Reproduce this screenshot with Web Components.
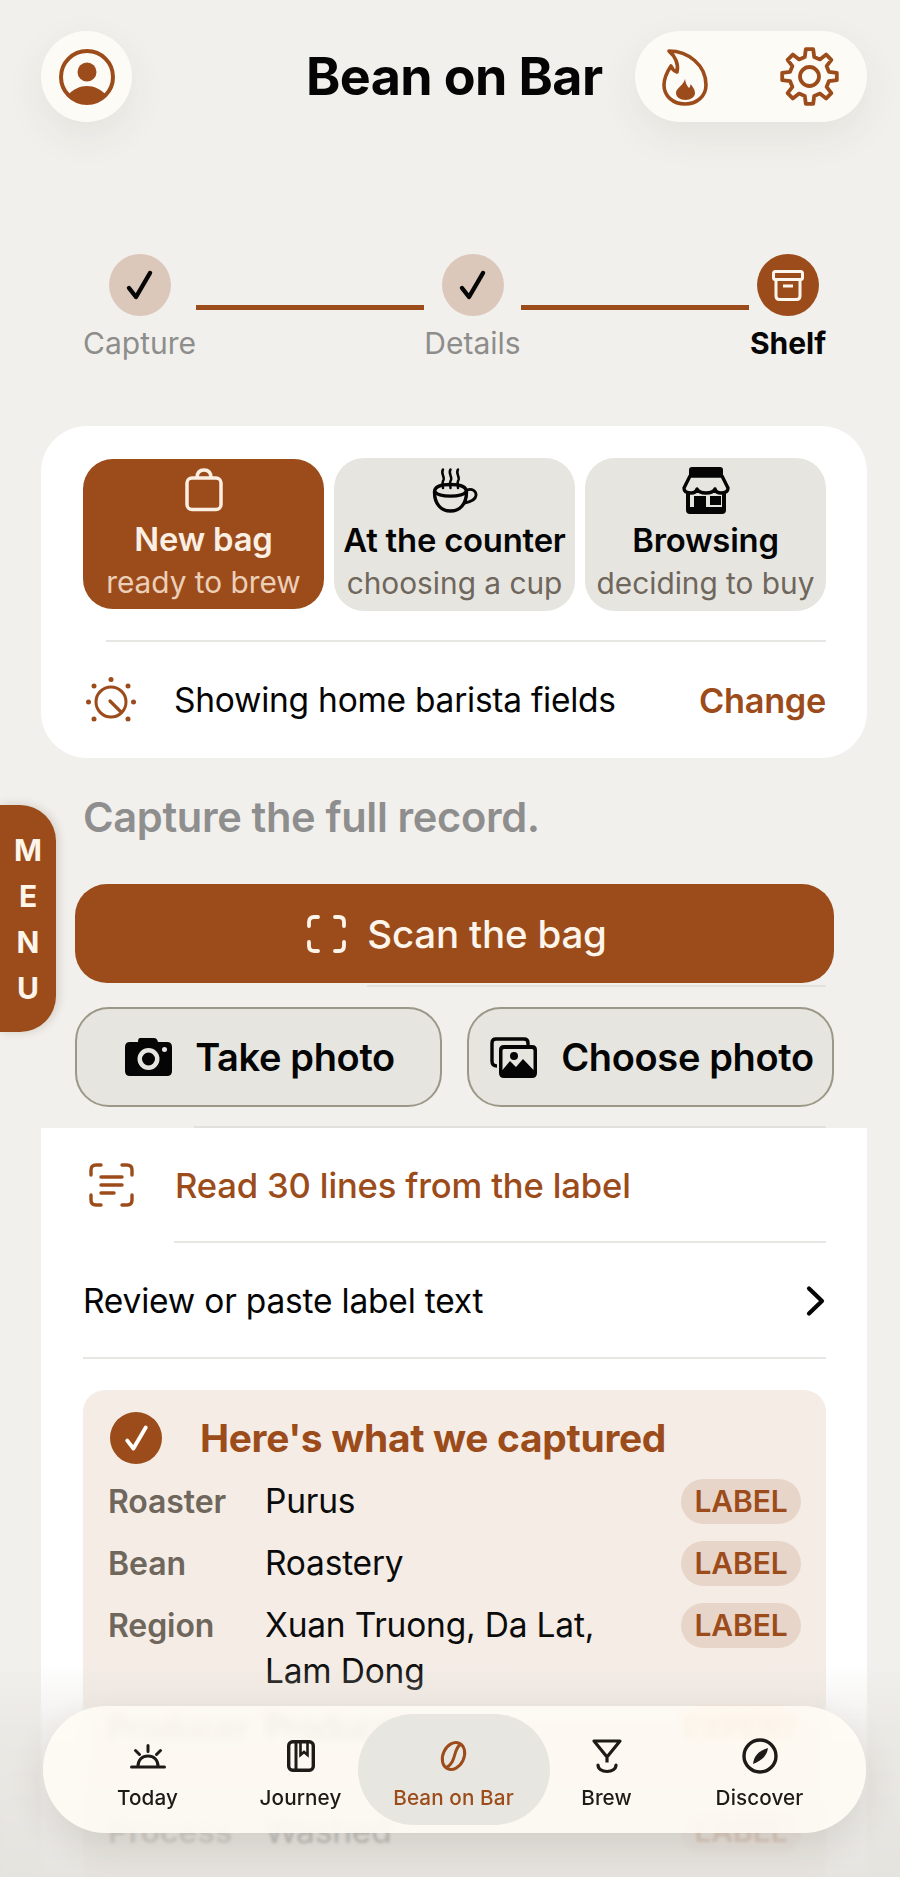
<!DOCTYPE html>
<html>
<head>
<meta charset="utf-8">
<title>Bean on Bar</title>
<style>
  html, body { margin: 0; padding: 0; }
  body {
    width: 900px; height: 1877px; overflow: hidden; position: relative;
    background: #f2f0ec; color: #050505;
    font-family: Inter, "Liberation Sans", sans-serif;
  }
</style>
</head>
<body>
<bb-header></bb-header>
<bb-stepper></bb-stepper>
<bb-mode-card></bb-mode-card>
<bb-capture></bb-capture>
<bb-label-list></bb-label-list>
<bb-menu-tab></bb-menu-tab>
<bb-bottom-fade></bb-bottom-fade>
<bb-nav></bb-nav>

<script>
const BROWN = '#9c4c1a';

function gearPath(cx, cy, outer, inner, teeth) {
  let d = '';
  const step = Math.PI * 2 / teeth;
  for (let i = 0; i < teeth; i++) {
    const a = i * step - Math.PI / 2;
    const pts = [
      [inner, a - step * 0.3], [outer, a - step * 0.17],
      [outer, a + step * 0.17], [inner, a + step * 0.3]
    ];
    pts.forEach((p, j) => {
      const x = (cx + Math.cos(p[1]) * p[0]).toFixed(1);
      const y = (cy + Math.sin(p[1]) * p[0]).toFixed(1);
      d += (i === 0 && j === 0 ? 'M' : 'L') + x + ' ' + y + ' ';
    });
  }
  return d + 'Z';
}

const ICONS = {
  avatar: [56, 56, `<defs><clipPath id="c"><circle cx="28" cy="28" r="26"/></clipPath></defs>
    <circle cx="28" cy="28" r="26" fill="none" stroke="currentColor" stroke-width="4"/>
    <circle cx="28" cy="23" r="9.5" fill="currentColor"/>
    <path clip-path="url(#c)" d="M8 47C14 40 21 37 28 37C35 37 42 40 48 47L48 56L8 56Z" fill="currentColor"/>`],
  flame: [46, 58, `<path d="M7 3C26 3 44 17 44 37C44 48 35 56 23 56C11 56 2 48 2 37C2 30 5 24 9 18C10 21 12 23 15 24C17 16 13 8 7 3Z" fill="none" stroke="currentColor" stroke-width="3.6" stroke-linejoin="round"/>
    <path d="M23 31C23.5 35 25 38 27 40C28 39 28.500 37.500 28.500 36C31 39 33 42 33 45C33 49 28.500 52 23.500 52C18 52 14 49 14 45C14 40 21 38 23 31Z" fill="currentColor"/>`],
  gear: [59, 59, `<path d="${gearPath(29.5, 29.5, 27.5, 20, 8)}" fill="none" stroke="currentColor" stroke-width="3.800" stroke-linejoin="round"/>
    <circle cx="29.500" cy="29.500" r="9.500" fill="none" stroke="currentColor" stroke-width="3.800"/>`],
  check: [27, 30, `<path d="M3 18L10 27L24 3" fill="none" stroke="currentColor" stroke-width="4.400" stroke-linecap="round" stroke-linejoin="round"/>`],
  archive: [32, 31, `<rect x="1.500" y="1.500" width="29" height="8" rx="2" fill="none" stroke="currentColor" stroke-width="3"/>
    <path d="M4 10V26Q4 29.500 7.500 29.500H24.500Q28 29.500 28 26V10" fill="none" stroke="currentColor" stroke-width="3"/>
    <path d="M11 16H21" stroke="currentColor" stroke-width="3"/>`],
  bag: [38, 43, `<rect x="2" y="10" width="34" height="31.500" rx="5" fill="none" stroke="currentColor" stroke-width="3.500"/>
    <path d="M12 10C12 5 14.500 2 19 2C23.500 2 26 5 26 10" fill="none" stroke="currentColor" stroke-width="3.500"/>`],
  cup: [46, 45, `<g fill="none" stroke="currentColor" stroke-linecap="round">
    <path stroke-width="2.500" d="M11 1.500C8 6 14 9 11 13C10 15 11 18 11 20M18.500 1.500C15.500 6 21.500 9 18.500 13C17.500 15 18.500 18 18.500 20M26 1.500C23 6 29 9 26 13C25 15 26 18 26 20"/>
    <path stroke-width="3.400" d="M2.500 24C2.500 19 9 16.500 18.500 16.500C28 16.500 34.500 19 34.500 24C34.500 36 28 43 18.500 43C9 43 2.500 36 2.500 24Z"/>
    <path stroke-width="3.400" d="M3 24C7 29.500 30 29.500 34 24"/>
    <path stroke-width="2.800" d="M35 22C40 20 44.500 23 44 27.500C43.500 32 38 34 32.500 35"/></g>`],
  store: [48, 47, `<path fill="currentColor" d="M10 0H38Q41 0 41 3V8H7V3Q7 0 10 0Z"/>
    <path fill="none" stroke="currentColor" stroke-width="3.400" stroke-linejoin="round" d="M8 9H40L46 21Q46 26 39 26Q34 26 33 22Q31 26 24 26Q17 26 15 22Q14 26 9 26Q2 26 2 21Z"/>
    <path fill="currentColor" d="M4 25H8V40H12V29H24V40H40V25H44V43Q44 47 40 47H8Q4 47 4 43Z"/>
    <rect x="28" y="29" width="11" height="9" fill="currentColor"/>`],
  knob: [50, 46, `<g fill="currentColor"><circle cx="25" cy="2.500" r="2.500"/><circle cx="8" cy="9" r="2.500"/><circle cx="42" cy="9" r="2.500"/><circle cx="2.500" cy="25" r="2.500"/><circle cx="47.500" cy="25" r="2.500"/><circle cx="8" cy="42" r="2.500"/><circle cx="42" cy="42" r="2.500"/></g>
    <circle cx="25" cy="25" r="15" fill="none" stroke="currentColor" stroke-width="3"/>
    <path d="M24 24L35 35" stroke="currentColor" stroke-width="3.200" stroke-linecap="round"/>`],
  scan: [39, 38, `<path fill="none" stroke="currentColor" stroke-width="3.800" stroke-linecap="round" stroke-linejoin="round" d="M2 11V7Q2 2 7 2H11M28 2H32Q37 2 37 7V11M37 27V31Q37 36 32 36H28M11 36H7Q2 36 2 31V27"/>`],
  camera: [47, 38, `<path fill-rule="evenodd" fill="currentColor" d="M15 0H29Q32 0 33 4H42Q47 4 47 9V33Q47 38 42 38H5Q0 38 0 33V9Q0 4 5 4H13Q13 0 15 0ZM23.500 10A11 11 0 1 0 23.501 32A11 11 0 1 0 23.500 10ZM23.500 14.500A6.500 6.500 0 1 1 23.499 27.500A6.500 6.500 0 1 1 23.500 14.500ZM39.500 9A2.500 2.500 0 1 0 39.501 14A2.500 2.500 0 1 0 39.500 9Z"/>`],
  photos: [47, 41, `<path fill="none" stroke="currentColor" stroke-width="3.400" d="M38 8V6Q38 2 34 2H6Q2 2 2 6V24Q2 29 7 29"/>
    <path fill-rule="evenodd" fill="currentColor" d="M14 8H42Q47 8 47 13V36Q47 41 42 41H14Q9 41 9 36V13Q9 8 14 8ZM14 12Q12.500 12 12.500 13.500V33L20 24L26 30L33 22L43.500 33V13.500Q43.500 12 42 12ZM24 15A4 4 0 1 0 24.001 23A4 4 0 1 0 24 15Z"/>`],
  readlines: [45, 44, `<g fill="none" stroke="currentColor" stroke-width="3.400" stroke-linecap="round" stroke-linejoin="round">
    <path d="M2 12V7Q2 2 7 2H12M33 2H38Q43 2 43 7V12M43 32V37Q43 42 38 42H33M12 42H7Q2 42 2 37V32"/>
    <path d="M12 14H33M12 22H33M12 30H25"/></g>`],
  chevron: [19, 30, `<path d="M3 2.500L16 15L3 27.500" fill="none" stroke="currentColor" stroke-width="4.200" stroke-linecap="round" stroke-linejoin="round"/>`],
  sun: [36, 25, `<g fill="none" stroke="currentColor" stroke-width="3" stroke-linecap="round">
    <path d="M1.500 23H34.500"/><path d="M8 22C8 16 12 12 18 12C24 12 28 16 28 22"/>
    <path d="M18 1.500V7.500M5.500 6.500L9.500 10.500M30.500 6.500L26.500 10.500"/></g>`],
  book: [28, 32, `<rect x="1.700" y="1.700" width="24.600" height="28.600" rx="4" fill="none" stroke="currentColor" stroke-width="3.400"/>
    <path d="M9 2V30" stroke="currentColor" stroke-width="3"/>
    <path d="M13.500 2V15L17 12L20.500 15V2" fill="none" stroke="currentColor" stroke-width="2.600"/>`],
  bean: [29, 30, `<g transform="rotate(25 14.500 15)" fill="none" stroke="currentColor" stroke-width="3" stroke-linecap="round">
    <ellipse cx="14.500" cy="15" rx="10.500" ry="14"/>
    <path d="M16 1.500C11 9 20 19 13 28.500"/></g>`],
  brew: [30, 34, `<path d="M2 2H28L15 18Z" fill="none" stroke="currentColor" stroke-width="3.200" stroke-linejoin="round"/>
    <path d="M15 19V23.500" stroke="currentColor" stroke-width="3.200"/>
    <path d="M6 26C6 30 10 32.500 15 32.500C20 32.500 24 30 24 26" fill="none" stroke="currentColor" stroke-width="3.200" stroke-linecap="round"/>`],
  compass: [36, 36, `<circle cx="18" cy="18" r="16" fill="none" stroke="currentColor" stroke-width="3.400"/>
    <path d="M26 10C25 17 21 22 11 26C12 18 16 13 26 10Z" fill="currentColor"/>`]
};

class BbIcon extends HTMLElement {
  connectedCallback() {
    const shadow = this.attachShadow({mode: 'open'});
    const icon = ICONS[this.getAttribute('name')];
    shadow.innerHTML = `
      <style>
        :host { display: block; flex: none; line-height: 0; }
        svg { display: block; overflow: visible; }
      </style>
      <svg xmlns="http://www.w3.org/2000/svg" width="${icon[0]}" height="${icon[1]}" viewBox="0 0 ${icon[0]} ${icon[1]}">${icon[2]}</svg>
    `;
  }
}
customElements.define('bb-icon', BbIcon);

class BbHeader extends HTMLElement {
  constructor() {
    super();
    this.attachShadow({mode: 'open'}).innerHTML = `
      <style>
        :host { display: flex; align-items: center; height: 91px; padding: 31px 33px 0 41px; color: ${BROWN}; }
        .round {
          display: flex; align-items: center; background: #fdfbf6;
          height: 91px; border-radius: 46px; box-shadow: 0 14px 40px rgba(60,50,40,.07);
        }
        .avatar { width: 91px; justify-content: center; }
        h1 {
          margin: 0 0 0 174px; width: 296px; flex: none; font-size: 52px; font-weight: 700; line-height: 91px;
          color: #050505; white-space: nowrap; letter-spacing: -.6px;
        }
        .actions { margin-left: 33px; width: 232px; padding: 0 28px 0 27px; box-sizing: border-box; justify-content: space-between; }
      </style>
      <div class="round avatar"><bb-icon name="avatar"></bb-icon></div>
      <h1>Bean on Bar</h1>
      <div class="round actions"><bb-icon name="flame"></bb-icon><bb-icon name="gear"></bb-icon></div>
    `;
  }
}
customElements.define('bb-header', BbHeader);

class BbStep extends HTMLElement {
  constructor() {
    super();
    const current = this.hasAttribute('current');
    this.attachShadow({mode: 'open'}).innerHTML = `
      <style>
        :host { display: flex; flex-direction: column; align-items: center; flex: none; }
        .dot {
          width: 62px; height: 62px; border-radius: 50%; display: flex; align-items: center; justify-content: center;
          background: ${current ? BROWN : '#dcc7bb'}; color: ${current ? '#fdf6ee' : '#050505'};
        }
        .name {
          margin-top: 9px; font-size: 30px; line-height: 36px; white-space: nowrap;
          font-weight: ${current ? 700 : 400}; color: ${current ? '#050505' : '#8d8d8b'};
        }
      </style>
      <div class="dot"><bb-icon name="${current ? 'archive' : 'check'}"></bb-icon></div>
      <div class="name"><slot></slot></div>
    `;
  }
}
customElements.define('bb-step', BbStep);

class BbStepper extends HTMLElement {
  constructor() {
    super();
    this.attachShadow({mode: 'open'}).innerHTML = `
      <style>
        :host { display: flex; align-items: flex-start; gap: 1px; margin: 132px 75px 0 84px; height: 108px; }
        .line { width: 228px; height: 5px; background: ${BROWN}; margin-top: 51px; flex: none; }
        bb-step:nth-of-type(1) { width: 111px; }
        bb-step:nth-of-type(2) { width: 95px; }
        bb-step:nth-of-type(3) { width: 76px; }
      </style>
      <bb-step>Capture</bb-step>
      <div class="line"></div>
      <bb-step>Details</bb-step>
      <div class="line"></div>
      <bb-step current>Shelf</bb-step>
    `;
  }
}
customElements.define('bb-stepper', BbStepper);

class BbModeTab extends HTMLElement {
  constructor() {
    super();
    const on = this.hasAttribute('active');
    this.attachShadow({mode: 'open'}).innerHTML = `
      <style>
        :host {
          display: flex; flex-direction: column; align-items: center; box-sizing: border-box; min-width: 0;
          height: ${on ? 150 : 153}px; margin-top: ${on ? 1 : 0}px; padding-top: ${on ? 6 : 8}px; border-radius: 30px;
          background: ${on ? BROWN : '#e6e5e0'}; color: ${on ? '#fbeee2' : '#050505'};
        }
        .icon { height: 49px; display: flex; align-items: center; }
        .title { margin-top: 5px; font-size: 32.800px; line-height: 40px; font-weight: 600; white-space: nowrap; letter-spacing: -.2px; }
        .sub { margin-top: 4px; font-size: 29.800px; line-height: 38px; white-space: nowrap; color: ${on ? '#eccfb9' : '#6f665c'}; }
      </style>
      <div class="icon"><bb-icon name="${this.getAttribute('icon')}"></bb-icon></div>
      <div class="title">${this.getAttribute('title')}</div>
      <div class="sub">${this.getAttribute('sub')}</div>
    `;
  }
}
customElements.define('bb-mode-tab', BbModeTab);

class BbModeCard extends HTMLElement {
  constructor() {
    super();
    this.attachShadow({mode: 'open'}).innerHTML = `
      <style>
        :host {
          display: block; box-sizing: border-box; height: 332px; margin: 64px 33px 0 41px;
          padding: 32px 41px 0 42px; background: #fff; border-radius: 46px;
        }
        .tabs { display: grid; grid-template-columns: repeat(3, 241px); gap: 10px; }
        .rule { height: 2px; background: #e7e6e3; margin: 29px 0 0 23px; }
        .row { display: flex; align-items: center; height: 118px; margin-left: 3px; margin-top: -1px; }
        .row bb-icon { color: ${BROWN}; }
        .text { margin-left: 38px; font-size: 33.500px; flex: 1; white-space: nowrap; letter-spacing: -.25px; }
        .change { font-size: 34.300px; font-weight: 600; color: ${BROWN}; letter-spacing: -.3px; }
      </style>
      <div class="tabs">
        <bb-mode-tab active icon="bag" title="New bag" sub="ready to brew"></bb-mode-tab>
        <bb-mode-tab icon="cup" title="At the counter" sub="choosing a cup"></bb-mode-tab>
        <bb-mode-tab icon="store" title="Browsing" sub="deciding to buy"></bb-mode-tab>
      </div>
      <div class="rule"></div>
      <div class="row"><bb-icon name="knob"></bb-icon><div class="text">Showing home barista fields</div><div class="change">Change</div></div>
    `;
  }
}
customElements.define('bb-mode-card', BbModeCard);

class BbCapture extends HTMLElement {
  constructor() {
    super();
    this.attachShadow({mode: 'open'}).innerHTML = `
      <style>
        :host { display: block; margin: 0 66px 0 75px; }
        h2 { margin: 31px 0 0 8px; height: 95px; font-size: 41.600px; line-height: 56px; font-weight: 600; color: #8e8e8e; letter-spacing: -.35px; white-space: nowrap; }
        button {
          display: flex; align-items: center; justify-content: center; box-sizing: border-box; margin: 0;
          font: inherit; color: inherit; cursor: pointer; white-space: nowrap;
        }
        .scan {
          width: 759px; height: 99px; border: 0; border-radius: 32px; background: ${BROWN}; color: #fdf4ea;
          font-size: 38.500px; font-weight: 500; gap: 21px; letter-spacing: -.2px; padding: 0 0 0 5px;
        }
        .hair { height: 2px; background: #e2e1dd; margin: 2px 8px 0 292px; }
        .pair { display: grid; grid-template-columns: 367px 367px; gap: 25px; margin-top: 20px; }
        .soft {
          height: 100px; border: 2px solid #9c9888; border-radius: 34px; background: #e6e5e0; color: #050505;
          font-size: 38px; font-weight: 600; letter-spacing: -.35px; padding: 0;
        }
        .take { gap: 23px; padding-left: 3px; }
        .choose { gap: 24px; padding-left: 3px; }
        .hair.low { margin: 19px 8px 0 119px; }
      </style>
      <h2>Capture the full record.</h2>
      <button class="scan"><bb-icon name="scan"></bb-icon>Scan the bag</button>
      <div class="hair"></div>
      <div class="pair">
        <button class="soft take"><bb-icon name="camera"></bb-icon>Take photo</button>
        <button class="soft choose"><bb-icon name="photos"></bb-icon>Choose photo</button>
      </div>
      <div class="hair low"></div>
    `;
  }
}
customElements.define('bb-capture', BbCapture);

class BbField extends HTMLElement {
  constructor() {
    super();
    const tag = this.getAttribute('tag');
    const orange = this.hasAttribute('orange');
    this.attachShadow({mode: 'open'}).innerHTML = `
      <style>
        :host { display: grid; grid-template-columns: 157px 1fr auto; align-items: start; min-height: ${this.getAttribute('h') || 62}px; }
        .k, .v { line-height: 46px; white-space: pre-line; }
        .k { font-size: 32px; font-weight: 600; color: #6f665c; letter-spacing: -.1px; white-space: nowrap; overflow: hidden; }
        .v { font-size: 33.500px; color: #0b0b0b; letter-spacing: -.2px; margin-top: -1px; }
        .tag {
          height: 45px; line-height: 45px; border-radius: 23px; box-sizing: border-box; width: 120px; text-align: center;
          background: ${orange ? '#fbdcc0' : '#e8d5c9'}; color: ${orange ? '#d9702a' : BROWN};
          font-size: 30px; font-weight: 600; letter-spacing: -.1px;
        }
      </style>
      <div class="k">${this.getAttribute('k')}</div>
      <div class="v">${this.getAttribute('v') || ''}</div>
      ${tag ? `<div class="tag">${tag}</div>` : ''}
    `;
  }
}
customElements.define('bb-field', BbField);

class BbLabelList extends HTMLElement {
  constructor() {
    super();
    this.attachShadow({mode: 'open'}).innerHTML = `
      <style>
        :host { display: block; box-sizing: border-box; margin: 0 33px 0 41px; height: 760px; padding: 0 41px 0 42px; background: #fff; }
        .read { display: flex; align-items: center; height: 113px; padding-left: 6px; color: ${BROWN}; }
        .read div { margin-left: 41px; font-size: 34.600px; font-weight: 500; letter-spacing: -.15px; white-space: nowrap; }
        .rule { height: 2px; background: #e7e6e3; }
        .rule.inset { margin-left: 91px; }
        .review { display: flex; align-items: center; justify-content: space-between; height: 114px; padding-top: 2px; box-sizing: border-box; font-size: 33.500px; letter-spacing: -.2px; }
        .review bb-icon { margin-right: 1px; }
        .panel {
          margin-top: 31px; height: 500px; box-sizing: border-box; padding: 22px 25px 0 25px;
          background: #f4ece5; border-radius: 22px 22px 0 0;
        }
        .head { display: flex; align-items: center; gap: 38px; height: 52px; margin: 0 0 15px 2px; }
        .badge { width: 52px; height: 52px; border-radius: 50%; background: ${BROWN}; color: #fff; display: flex; align-items: center; justify-content: center; }
        .badge bb-icon { transform: scale(.88); }
        .head h3 { margin: -2px 0 0; font-size: 38.900px; font-weight: 700; color: ${BROWN}; letter-spacing: -.3px; white-space: nowrap; }
      </style>
      <div class="read"><bb-icon name="readlines"></bb-icon><div>Read 30 lines from the label</div></div>
      <div class="rule inset"></div>
      <div class="review"><span>Review or paste label text</span><bb-icon name="chevron"></bb-icon></div>
      <div class="rule"></div>
      <div class="panel">
        <div class="head"><div class="badge"><bb-icon name="check"></bb-icon></div><h3>Here's what we captured</h3></div>
        <bb-field k="Roaster" v="Purus" tag="LABEL"></bb-field>
        <bb-field k="Bean" v="Roastery" tag="LABEL"></bb-field>
        <bb-field k="Region" v="Xuan Truong, Da Lat,
Lam Dong" tag="LABEL" h="103"></bb-field>
        <bb-field k="Producer" v="Producer" tag="EXPERT" orange h="103"></bb-field>
        <bb-field k="Process" v="Washed" tag="LABEL"></bb-field>
      </div>
    `;
  }
}
customElements.define('bb-label-list', BbLabelList);

class BbMenuTab extends HTMLElement {
  constructor() {
    super();
    this.attachShadow({mode: 'open'}).innerHTML = `
      <style>
        :host {
          position: absolute; left: 0; top: 805px; width: 56px; height: 227px; box-sizing: border-box; padding-top: 22px;
          display: flex; flex-direction: column; align-items: center;
          background: ${BROWN}; color: #fdf4ea; border-radius: 0 36px 36px 0; box-shadow: 2px 0 10px rgba(60,40,20,.18);
          font-size: 30px; font-weight: 700;
        }
        span { display: block; height: 46px; line-height: 46px; }
      </style>
      <span>M</span><span>E</span><span>N</span><span>U</span>
    `;
  }
}
customElements.define('bb-menu-tab', BbMenuTab);

class BbBottomFade extends HTMLElement {
  constructor() {
    super();
    this.attachShadow({mode: 'open'}).innerHTML = `
      <style>
        :host {
          position: absolute; left: 0; right: 0; bottom: 0; height: 215px; pointer-events: none;
          background: linear-gradient(to bottom, rgba(228,226,221,0) 0%, rgba(228,226,221,.5) 30%, rgba(228,226,221,.92) 100%);
        }
        .blur { position: absolute; left: 0; right: 0; bottom: 0; height: 172px; backdrop-filter: blur(1.500px); }
      </style>
      <div class="blur"></div>
    `;
  }
}
customElements.define('bb-bottom-fade', BbBottomFade);

class BbNavItem extends HTMLElement {
  constructor() {
    super();
    const on = this.hasAttribute('active');
    this.attachShadow({mode: 'open'}).innerHTML = `
      <style>
        :host { display: flex; flex-direction: column; align-items: center; position: relative; color: ${on ? BROWN : '#1d1a17'}; }
        .pill { display: ${on ? 'block' : 'none'}; position: absolute; left: -19px; right: -20px; top: -23px; height: 111px; border-radius: 56px; background: #e8e6e1; }
        .icon { position: relative; height: 38px; display: flex; align-items: center; }
        .name { position: relative; margin-top: 10px; font-size: 20.700px; line-height: 26px; font-weight: 500; white-space: nowrap; letter-spacing: .1px; }
      </style>
      <div class="pill"></div>
      <div class="icon"><bb-icon name="${this.getAttribute('icon')}"></bb-icon></div>
      <div class="name"><slot></slot></div>
    `;
  }
}
customElements.define('bb-nav-item', BbNavItem);

class BbNav extends HTMLElement {
  constructor() {
    super();
    this.attachShadow({mode: 'open'}).innerHTML = `
      <style>
        :host {
          position: absolute; left: 43px; top: 1706px; width: 823px; height: 127px; box-sizing: border-box;
          padding: 31px 29px 0 28px; display: grid; grid-template-columns: repeat(5, 153px);
          background: rgba(255,251,245,.87); border-radius: 64px;
          backdrop-filter: blur(4px); box-shadow: 0 14px 36px rgba(60,50,40,.12);
        }
      </style>
      <bb-nav-item icon="sun">Today</bb-nav-item>
      <bb-nav-item icon="book">Journey</bb-nav-item>
      <bb-nav-item active icon="bean">Bean on Bar</bb-nav-item>
      <bb-nav-item icon="brew">Brew</bb-nav-item>
      <bb-nav-item icon="compass">Discover</bb-nav-item>
    `;
  }
}
customElements.define('bb-nav', BbNav);
</script>
</body>
</html>
